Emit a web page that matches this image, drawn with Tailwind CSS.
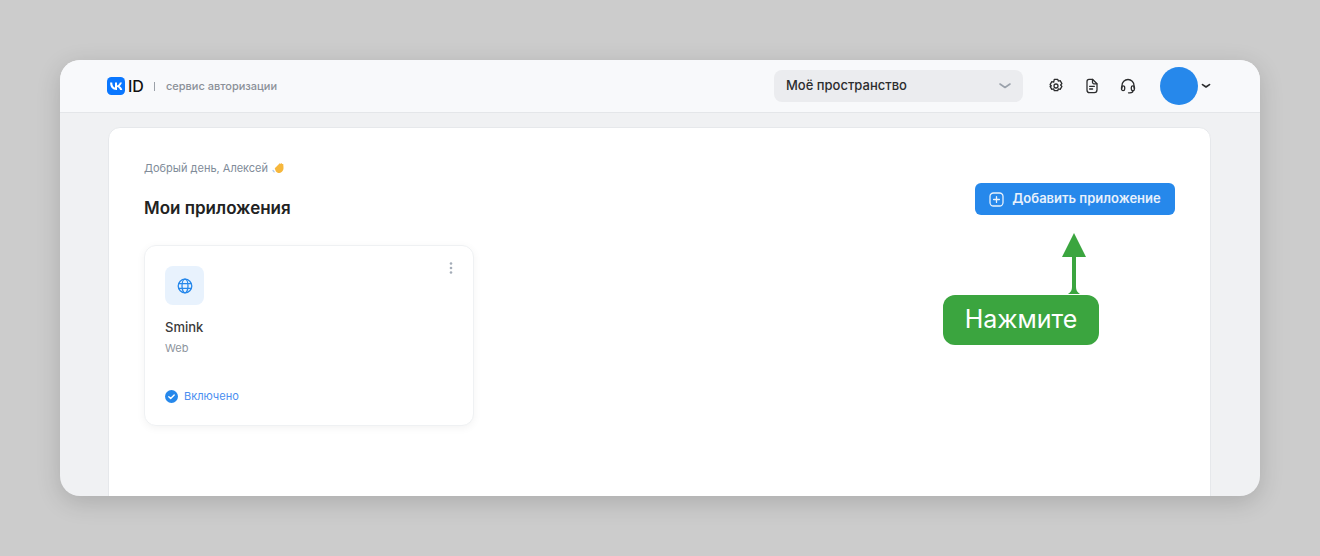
<!DOCTYPE html>
<html lang="ru">
<head>
    <meta charset="UTF-8">
    <meta name="viewport" content="width=device-width, initial-scale=1.0">
    <title>VK ID</title>
    <script src="https://cdn.jsdelivr.net/npm/@tailwindcss/browser@4"></script>
</head>
<body class="bg-[#cccccc] h-[556px] overflow-hidden font-['Inter',sans-serif]">
    <div class="pt-[60px] px-[60px]">
        <div class="relative h-[436px] rounded-[20px] bg-[#f0f1f3] shadow-[0_6px_24px_rgba(0,0,0,0.16)]">
            <div class="h-full overflow-hidden rounded-[20px] flex flex-col">
                <!-- header -->
                <header class="h-[53px] shrink-0 bg-[#f8f9fb] border-b border-[#e4e6e9] flex items-center pl-[47px] pr-[49px]">
                    <svg class="w-[18px] h-[18px]" viewBox="0 0 18 18">
                        <rect width="18" height="18" rx="4.5" fill="#0a77ff"/>
                        <path d="M9.6 12.9C5.5 12.9 3.2 10.1 3.1 5.4h2.1c.1 3.4 1.6 4.9 2.8 5.2V5.4h2v3c1.2-.1 2.5-1.5 2.9-3h2c-.3 1.8-1.7 3.200-2.600 3.700.9.4 2.400 1.500 3 3.800h-2.200c-.5-1.500-1.700-2.600-3.100-2.800v2.800z" fill="#fff"/>
                    </svg>
                    <span class="ml-[3px] text-[16px] leading-none font-medium text-[#111111]">ID</span>
                    <span class="ml-[10px] w-px h-[9px] bg-[#9aa0a8]"></span>
                    <span class="ml-[11px] text-[11px] font-medium text-[#8b9098]">сервис авторизации</span>

                    <div class="ml-auto w-[249px] h-[32px] rounded-[8px] bg-[#ebecef] flex items-center justify-between pl-[12px] pr-[11px]">
                        <span class="text-[13px] font-medium text-[#2c2d2e]">Моё пространство</span>
                        <svg class="w-[14px] h-[14px] text-[#9aa1ab]" viewBox="0 0 14 14" fill="none" stroke="currentColor" stroke-width="1.600" stroke-linecap="round" stroke-linejoin="round"><path d="M2 5l5 3.500L12 5"/></svg>
                    </div>

                    <svg class="ml-[25px] w-[16px] h-[16px] text-[#2c2d2e]" viewBox="0 0 16 16" fill="none" stroke="currentColor" stroke-width="1.300" stroke-linejoin="round">
                        <path d="M6.300 1.300h3.400l.6 1.800 1.900-.4 1.700 2.900-1.300 1.400 1.300 1.400-1.700 2.900-1.900-.4-.6 1.800H6.300l-.6-1.800-1.900.4-1.700-2.900L3.400 8 2.100 6.600l1.700-2.900 1.900.4z"/>
                        <circle cx="8" cy="8" r="2"/>
                    </svg>
                    <svg class="ml-[20px] w-[16px] h-[16px] text-[#2c2d2e]" viewBox="0 0 16 16" fill="none" stroke="currentColor" stroke-width="1.300" stroke-linecap="round" stroke-linejoin="round">
                        <path d="M5 1.300h3.500L13 5.800v6c0 1.600-1.100 2.900-2.700 2.900H5.500c-1.500 0-2.500-1.200-2.500-2.700V3.500C3 2.200 3.800 1.300 5 1.300z"/>
                        <path d="M8.500 1.500v2.800c0 .9.700 1.500 1.500 1.500h2.800M5.600 8.300h4.800M5.600 11h3"/>
                    </svg>
                    <svg class="ml-[20px] w-[16px] h-[16px] text-[#2c2d2e]" viewBox="0 0 16 16" fill="none" stroke="currentColor" stroke-width="1.300" stroke-linecap="round" stroke-linejoin="round">
                        <path d="M2 10V7.500a6 6 0 0 1 12 0V10"/>
                        <rect x="1.500" y="7.800" width="3.200" height="4.800" rx="1.600"/>
                        <rect x="11.300" y="7.800" width="3.200" height="4.800" rx="1.600"/>
                        <path d="M13 12.800c0 1.300-1.300 2-3 2H8.500"/>
                    </svg>

                    <div class="ml-[24px] w-[38px] h-[38px] rounded-full bg-[#2688eb]"></div>
                    <svg class="ml-[3px] w-[10px] h-[10px] text-[#2c2d2e]" viewBox="0 0 10 10" fill="none" stroke="currentColor" stroke-width="1.700" stroke-linecap="round" stroke-linejoin="round"><path d="M1.500 3.600L5 6l3.500-2.400"/></svg>
                </header>

                <!-- page -->
                <div class="flex-1 pt-[14px] pl-[48px] pr-[49px]">
                    <main class="h-[400px] bg-white border border-[#e6e8eb] rounded-[12px] pt-[31px] pl-[35px] pr-[35px]">
                        <div class="flex items-center h-[18px] text-[11px] text-[#818c99]">
                            <span>Добрый день, Алексей</span>
                            <svg class="ml-[4px] w-[14px] h-[14px]" viewBox="0 0 14 14">
                                <path d="M1 9.500l1.200 1.400" stroke="#a9c8ee" stroke-width="1.200" stroke-linecap="round" fill="none"/>
                                <path d="M3.300 6.800L7.500 2.500c.5-.4 1.200.2.800.8l.8-.8c.5-.5 1.300.2.800.8l.5-.3c.7-.3 1.200.3.900.8l.2 2.800c.2 2.600-1.400 5.200-4 5.400-1.700.100-2.800-.6-3.700-1.800L2.900 7.800c-.3-.6.100-1.200.4-1z" fill="#f6b73c"/>
                            </svg>
                        </div>

                        <div class="flex justify-between">
                            <h1 class="mt-[19px] text-[17px] leading-[24px] font-semibold text-[#222222]">Мои приложения</h1>
                            <button class="mt-[6px] w-[200px] h-[32px] rounded-[6px] bg-[#2688eb] flex items-center justify-center gap-[8px] text-[13px] font-semibold text-[#e8f1fc]">
                                <svg class="w-[15px] h-[15px]" viewBox="0 0 15 15" fill="none" stroke="currentColor" stroke-width="1.300" stroke-linecap="round"><rect x="1" y="1" width="13" height="13" rx="3.500"/><path d="M7.500 4.600v5.800M4.600 7.500h5.800"/></svg>
                                Добавить приложение
                            </button>
                        </div>

                        <!-- app card -->
                        <div class="mt-[25px] relative w-[330px] h-[181px] rounded-[12px] border border-[#eff1f3] bg-white shadow-[0_2px_8px_rgba(0,0,0,0.05)] pt-[20px] pl-[20px]">
                            <div class="w-[39px] h-[39px] rounded-[8px] bg-[#e8f2fd] flex items-center justify-center">
                                <svg class="w-[16px] h-[16px] text-[#2688eb]" viewBox="0 0 16 16" fill="none" stroke="currentColor" stroke-width="1.300"><circle cx="8" cy="8" r="6.800"/><ellipse cx="8" cy="8" rx="3" ry="6.800"/><path d="M1.600 5.700h12.800M1.600 10.300h12.800"/></svg>
                            </div>
                            <div class="mt-[12px] text-[13px] leading-[20px] font-medium text-[#3a3a3a]">Smink</div>
                            <div class="mt-[1px] text-[11px] leading-[20px] text-[#8d949d]">Web</div>
                            <div class="mt-[30px] flex items-center gap-[6px]">
                                <svg class="w-[13px] h-[13px]" viewBox="0 0 13 13"><circle cx="6.500" cy="6.500" r="6.500" fill="#2688eb"/><path d="M3.800 6.700l1.900 1.800 3.500-3.500" fill="none" stroke="#fff" stroke-width="1.400" stroke-linecap="round" stroke-linejoin="round"/></svg>
                                <span class="text-[11px] text-[#4b8ef0]">Включено</span>
                            </div>
                            <svg class="absolute top-[15px] right-[20px] w-[4px] h-[14px] text-[#a4acb8]" viewBox="0 0 4 14" fill="currentColor"><circle cx="2" cy="2.500" r="1.300"/><circle cx="2" cy="7" r="1.300"/><circle cx="2" cy="11.500" r="1.300"/></svg>
                        </div>
                    </main>
                </div>
            </div>

            <!-- callout over the page -->
            <svg class="absolute left-[1001px] top-[173px] w-[26px] h-[64px] text-[#3ba53f]" viewBox="0 0 26 64" fill="currentColor"><path d="M13 0l12 24H15v30c0 3 1 5 4 7H7c3-2 4-4 4-7V24H1z"/></svg>
            <div class="absolute left-[883px] top-[235px] w-[156px] h-[50px] rounded-[12px] bg-[#3ba53f] flex items-center justify-center text-[25px] text-white">Нажмите</div>
        </div>
    </div>
</body>
</html>
